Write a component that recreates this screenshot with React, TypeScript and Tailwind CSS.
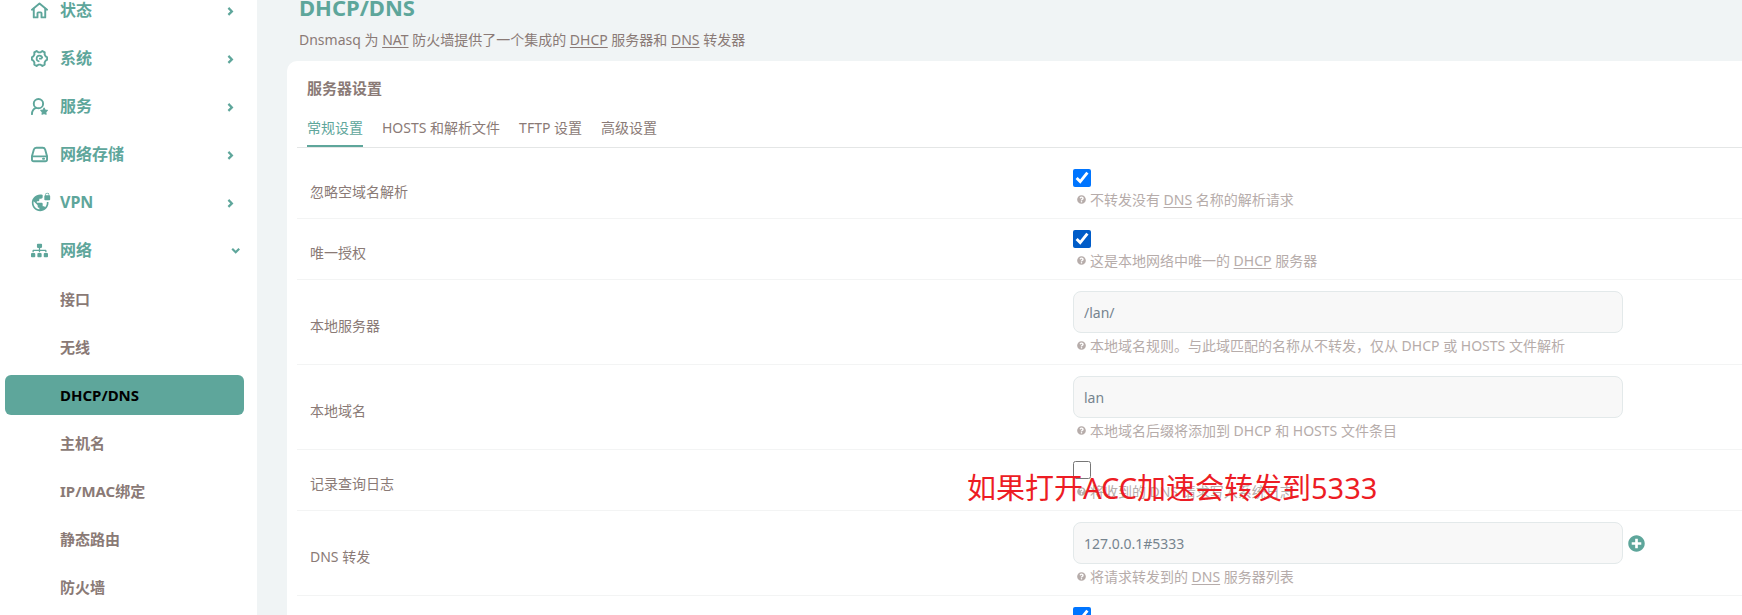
import { useState, type ReactNode } from "react";
import { FaSitemap, FaQuestionCircle, FaPlusCircle } from "react-icons/fa";
import { MdVpnLock } from "react-icons/md";

const stroke = {
  viewBox: "0 0 16 16",
  fill: "none",
  stroke: "currentColor",
  strokeWidth: 1.8,
  strokeLinejoin: "round" as const,
  strokeLinecap: "round" as const,
  className: "size-[17px]",
  "aria-hidden": true,
};

function HomeIcon() {
  return (
    <svg {...stroke}>
      <path d="M.9 7.2 8 1.4l7.100 5.800" />
      <path d="M2.600 6.400V14.500H6.100V10.600Q6.100 9.800 6.900 9.800H9.100Q9.900 9.800 9.900 10.600V14.500H13.400V6.400" />
    </svg>
  );
}

function GearIcon() {
  return (
    <svg {...stroke}>
      <path d="M5.300 1 6.900 2.200H9.100L10.700 1l2.200 1.300-.1 1.900 1 1.800 1.400.8v2.400l-1.400.8-1 1.800.1 1.900L10.700 15 9.100 13.800H6.900L5.300 15l-2.200-1.300.1-1.900-1-1.800-1.400-.8V6.800L2.200 6l1-1.800-.1-1.900Z" />
      <path d="M7.300 10.600A2.700 2.700 0 1 1 10.600 7.300M8.300 8.200h1.200" strokeWidth="1.600" />
    </svg>
  );
}

function UserStarIcon() {
  return (
    <svg {...stroke}>
      <circle cx="7" cy="5.300" r="4.400" />
      <path d="M.9 15.200C.9 11.800 2.600 10 4.800 9.200" />
      <path
        d="m12.300 9.400 1 1.800 2.100.4-1.400 1.600.2 2.100-1.900-.8-1.900.8.2-2.100-1.400-1.600 2.100-.4Z"
        fill="currentColor"
        strokeWidth="1"
      />
    </svg>
  );
}

function DriveIcon() {
  return (
    <svg {...stroke}>
      <path d="M.9 9.600 2.700 3.300Q3.200 1.600 5 1.600h6q1.800 0 2.300 1.700l1.800 6.300v3q0 1.700-1.700 1.700H2.600q-1.700 0-1.700-1.700Z" />
      <path d="M1 9.800h14M11.300 12h1" />
    </svg>
  );
}

function Chevron({ open }: { open?: boolean }) {
  return (
    <svg
      viewBox="0 0 16 16"
      className={open ? "ml-auto size-4" : "ml-auto mr-[5px] size-4"}
      fill="none"
      stroke="currentColor"
      strokeWidth="2.200"
      aria-hidden
    >
      <path d={open ? "M4.200 6.800 7.700 10.300l3.500-3.500" : "M5.400 5.900 8.900 9.400l-3.500 3.500"} />
    </svg>
  );
}

const groups: { label: string; icon: ReactNode; open?: boolean }[] = [
  { label: "状态", icon: <HomeIcon /> },
  { label: "系统", icon: <GearIcon /> },
  { label: "服务", icon: <UserStarIcon /> },
  { label: "网络存储", icon: <DriveIcon /> },
  { label: "VPN", icon: <MdVpnLock className="size-5" /> },
  { label: "网络", icon: <FaSitemap className="size-[17px]" />, open: true },
];

const pages = ["接口", "无线", "DHCP/DNS", "主机名", "IP/MAC绑定", "静态路由", "防火墙"];

function Sidebar() {
  return (
    <nav className="w-[257px] shrink-0 bg-white pr-[13px] pl-[5px]">
      <ul className="-mt-[9px] flex flex-col gap-2">
        {groups.map((g) => (
          <li key={g.label}>
            <button
              type="button"
              aria-expanded={!!g.open}
              className="flex h-10 w-full items-center pb-0.5 pl-[26px] text-base font-bold text-[#5ea69b]"
            >
              <span className="flex w-[29px] items-center">{g.icon}</span>
              {g.label}
              <Chevron open={g.open} />
            </button>
          </li>
        ))}
        {pages.map((p) => (
          <li key={p}>
            <a
              href="#"
              className={
                p === "DHCP/DNS"
                  ? "flex h-10 items-center rounded-md bg-[#5ea69b] pt-0.5 pl-[55px] text-[15px] font-bold text-black"
                  : "flex h-10 items-center rounded-md pt-0.5 pl-[55px] text-[15px] font-bold text-[#8a7a76]"
              }
            >
              {p}
            </a>
          </li>
        ))}
      </ul>
    </nav>
  );
}

function Abbr({ children }: { children: ReactNode }) {
  return <span className="underline underline-offset-2">{children}</span>;
}

function Row({ id, label, help, children }: { id: string; label: string; help: ReactNode; children: ReactNode }) {
  return (
    <div className="grid grid-cols-[537fr_463fr] border-b border-[#f3f4f4] pt-[11px] pb-[9px]">
      <label htmlFor={id} className="self-center pt-[5px] pl-[13px]">
        {label}
      </label>
      <div>
        <div className="flex items-center">{children}</div>
        <p className="flex items-center gap-1 pt-[3px] pl-1 leading-[19px] text-[#b6acaa]">
          <FaQuestionCircle className="size-[9px] shrink-0" />
          <span>{help}</span>
        </p>
      </div>
    </div>
  );
}

const inputClass =
  "h-[42px] w-[550px] max-w-[85%] rounded-lg border border-[#e3e9ea] bg-[#f8f8f8] px-[10px] text-[#76848f] outline-none";

const tabs = ["常规设置", "HOSTS 和解析文件", "TFTP 设置", "高级设置"];

export default function App() {
  const [tab, setTab] = useState(0);
  return (
    <div className="relative flex h-screen overflow-hidden bg-[#f0f4f5] font-['Noto_Sans','Noto_Sans_CJK_SC',sans-serif] text-sm text-[#8a7a76]">
      <Sidebar />
      <main className="min-w-0 flex-1 pl-[30px]">
        <header className="pl-3">
          <h2 className="-mt-[9px] text-[22px] leading-8 font-bold text-[#5ea69b]">DHCP/DNS</h2>
          <p className="pt-[7px] pb-[11px] leading-5">
            Dnsmasq 为 <Abbr>NAT</Abbr> 防火墙提供了一个集成的 <Abbr>DHCP</Abbr> 服务器和 <Abbr>DNS</Abbr> 转发器
          </p>
        </header>
        <section className="rounded-tl-[10px] bg-white pt-4 pl-[10px]">
          <h3 className="pl-[10px] text-[15px] leading-[22px] font-bold">服务器设置</h3>
          <div role="tablist" className="flex gap-[19px] border-b border-[#e4e6e6] pt-[15px] pl-[10px]">
            {tabs.map((t, i) => (
              <button
                key={t}
                type="button"
                role="tab"
                aria-selected={tab === i}
                onClick={() => setTab(i)}
                className={
                  tab === i
                    ? "h-[33px] border-b-2 border-[#5ea69b] pb-1 leading-5 text-[#5ea69b]"
                    : "h-[33px] border-b-2 border-transparent pb-1 leading-5"
                }
              >
                {t}
              </button>
            ))}
          </div>
          <form className="pt-[10px]">
            <Row id="domainneeded" label="忽略空域名解析" help={<>不转发没有 <Abbr>DNS</Abbr> 名称的解析请求</>}>
              <input id="domainneeded" type="checkbox" defaultChecked className="size-[18px]" />
            </Row>
            <Row id="authoritative" label="唯一授权" help={<>这是本地网络中唯一的 <Abbr>DHCP</Abbr> 服务器</>}>
              <input id="authoritative" type="checkbox" defaultChecked className="size-[18px] accent-[#005cc8]" />
            </Row>
            <Row id="local" label="本地服务器" help="本地域名规则。与此域匹配的名称从不转发，仅从 DHCP 或 HOSTS 文件解析">
              <input id="local" type="text" defaultValue="/lan/" className={inputClass} />
            </Row>
            <Row id="domain" label="本地域名" help="本地域名后缀将添加到 DHCP 和 HOSTS 文件条目">
              <input id="domain" type="text" defaultValue="lan" className={inputClass} />
            </Row>
            <Row id="logqueries" label="记录查询日志" help="将收到的 DNS 请求写入系统日志">
              <input id="logqueries" type="checkbox" className="size-[18px]" />
            </Row>
            <Row id="server" label="DNS 转发" help={<>将请求转发到的 <Abbr>DNS</Abbr> 服务器列表</>}>
              <input id="server" type="text" defaultValue="127.0.0.1#5333" className={inputClass} />
              <button type="button" aria-label="添加" className="ml-[5px] text-[#5ea69b]">
                <FaPlusCircle className="size-[17px]" />
              </button>
            </Row>
            <div className="pt-[11px]">
              <input
                type="checkbox"
                defaultChecked
                aria-label="重绑定保护"
                className="ml-[53.7%] block size-[18px]"
              />
            </div>
          </form>
        </section>
      </main>
      <p className="absolute top-[468px] left-[967px] text-[29px] leading-10 whitespace-nowrap text-[#ed1c24]">
        如果打开ACC加速会转发到5333
      </p>
    </div>
  );
}
